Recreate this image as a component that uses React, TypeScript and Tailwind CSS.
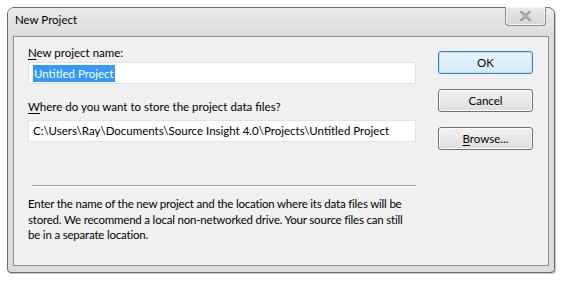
import React from "react";

function WinButton({ children, focused }: { children: React.ReactNode; focused?: boolean }) {
  return (
    <button
      className={`h-[23px] w-[95px] rounded-[3px] border text-[11.5px] leading-none text-black bg-gradient-to-b ${
        focused
          ? "border-[#3c7fb1] from-[#eaf6fd] to-[#d4ebf8] shadow-[inset_0_0_0_1px_#b6e3f9]"
          : "border-[#707070] from-[#f2f2f2] to-[#dddddd] shadow-[inset_0_0_0_1px_#fbfbfb]"
      }`}
    >
      {children}
    </button>
  );
}

export default function App() {
  return (
    <div className="w-[564px] h-[281px] bg-white pt-[7px] pl-[7px] font-['Lato','Noto_Sans',sans-serif]">
      <div className="relative w-[548px] h-[266px] rounded-t-[7px] rounded-b-[4px] border border-[#6b6b6b] bg-[#dcdcdc] shadow-[1px_1px_0_#c8c8c8] flex flex-col">
        {/* title bar */}
        <div className="h-[28px] flex items-center pb-[4px] pl-[7px] text-[11.5px] text-black rounded-t-[6px] bg-gradient-to-b from-[#ebebeb] to-[#dcdcdc]">
          New Project
        </div>
        <button className="absolute top-[-1px] right-[8px] w-[41px] h-[19px] rounded-b-[4px] border border-t-0 border-[#8a8a8a] bg-gradient-to-b from-[#e9e9e9] to-[#d6d6d6] flex items-center justify-center shadow-[inset_0_0_0_1px_#f4f4f4]">
          <svg width="11" height="10" viewBox="0 0 11 10">
            <path d="M1.5 1 L9.5 9 M9.5 1 L1.5 9" stroke="#7a7a7a" strokeWidth="2.2" strokeLinecap="square" />
            <path d="M1.5 1 L9.5 9 M9.5 1 L1.5 9" stroke="#eeeeee" strokeWidth="0.8" strokeLinecap="square" />
          </svg>
        </button>

        {/* client area */}
        <div className="mx-[5px] mb-[6px] flex-1 border border-[#8c8c8c] bg-[#f0f0f0] flex pl-[14px] pr-[12px] pt-[8px] text-[11.5px] text-black whitespace-nowrap">
          <div className="w-[388px] flex flex-col">
            <div className="h-[16px] leading-[16px]">
              <span className="underline underline-offset-2">N</span>ew project name:
            </div>
            <div className="mt-[1px] h-[22px] bg-white border border-[#e3e3e3] flex items-center pl-[4px]">
              <span className="bg-[#3399ff] text-white px-[1px] leading-[17px]">Untitled Project</span>
            </div>
            <div className="mt-[15px] h-[16px] leading-[16px]">
              <span className="underline underline-offset-2">W</span>here do you want to store the project data files?
            </div>
            <div className="mt-[5px] h-[22px] bg-white border border-[#e3e3e3] flex items-center pl-[4px]">
              C:\Users\Ray\Documents\Source Insight 4.0\Projects\Untitled Project
            </div>
            <div className="mt-[43px] ml-[4px] h-[2px] border-t border-[#a0a0a0] border-b border-b-white" />
            <p className="mt-[9px] leading-[15.5px] tracking-[-0.2px]">
              Enter the name of the new project and the location where its data files will be
              <br />
              stored. We recommend a local non-networked drive. Your source files can still
              <br />
              be in a separate location.
            </p>
          </div>
          <div className="ml-[22px] pt-[6px] flex flex-col gap-[15px]">
            <WinButton focused>OK</WinButton>
            <WinButton>Cancel</WinButton>
            <WinButton>
              <span className="underline underline-offset-2">B</span>rowse...
            </WinButton>
          </div>
        </div>
      </div>
    </div>
  );
}
